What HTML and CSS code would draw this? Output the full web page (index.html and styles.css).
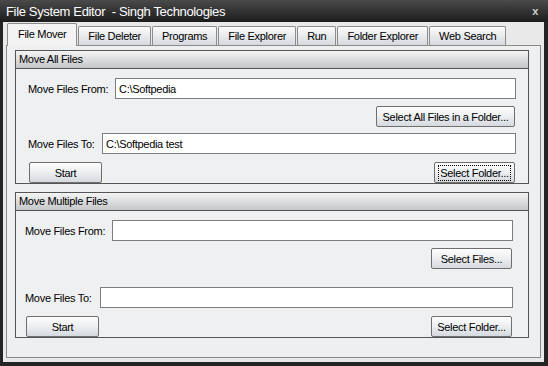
FILE: index.html
```html
<!DOCTYPE html>
<html lang="en">
<head>
    <meta charset="UTF-8">
    <title>File System Editor</title>
    <link rel="stylesheet" href="styles.css">
</head>
<body>
    <div class="window">
        <div class="titlebar">
            <span class="title">File System Editor &nbsp;- Singh Technologies</span>
            <span class="close">x</span>
        </div>
        <div class="client">
            <!-- Tab strip -->
            <div class="tabs">
                <div class="tab active">File Mover</div>
                <div class="tab">File Deleter</div>
                <div class="tab">Programs</div>
                <div class="tab">File Explorer</div>
                <div class="tab">Run</div>
                <div class="tab">Folder Explorer</div>
                <div class="tab">Web Search</div>
            </div>
            <div class="panel">
                <!-- Move All Files -->
                <div class="group group-all">
                    <div class="group-head">Move All Files</div>
                    <div class="group-body">
                        <div class="row">
                            <label class="lbl lbl-from">Move Files From:</label>
                            <input type="text" class="field" value="C:\Softpedia">
                        </div>
                        <div class="row row-right">
                            <button class="btn btn-all">Select All Files in a Folder...</button>
                        </div>
                        <div class="row">
                            <label class="lbl lbl-to">Move Files To:</label>
                            <input type="text" class="field" value="C:\Softpedia test">
                        </div>
                        <div class="row row-split">
                            <button class="btn btn-start">Start</button>
                            <button class="btn btn-folder focused"><span>Select Folder...</span></button>
                        </div>
                    </div>
                </div>
                <!-- Move Multiple Files -->
                <div class="group group-multi">
                    <div class="group-head">Move Multiple Files</div>
                    <div class="group-body">
                        <div class="row">
                            <label class="lbl lbl-from">Move Files From:</label>
                            <input type="text" class="field" value="">
                        </div>
                        <div class="row row-right">
                            <button class="btn btn-files">Select Files...</button>
                        </div>
                        <div class="row row-to2">
                            <label class="lbl lbl-to2">Move Files To:</label>
                            <input type="text" class="field" value="">
                        </div>
                        <div class="row row-split">
                            <button class="btn btn-start">Start</button>
                            <button class="btn btn-folder">Select Folder...</button>
                        </div>
                    </div>
                </div>
            </div>
        </div>
    </div>
</body>
</html>
```

FILE: styles.css
```css
body {
    margin: 0;
    font-family: Tahoma, "Liberation Sans", Arial, sans-serif;
    font-size: 11px;
    letter-spacing: -0.3px;
    color: #000;
    overflow: hidden;
}
.window {
    width: 548px;
    height: 366px;
    background: #242424;
    display: flex;
    flex-direction: column;
}
.titlebar {
    height: 22px;
    background: linear-gradient(#4a4a4a, #1c1c1c);
    color: #fff;
    font-size: 13px;
    letter-spacing: -0.35px;
    display: flex;
    align-items: center;
    justify-content: space-between;
    padding: 0 10px 0 6px;
}
.close {
    color: #cfcfcf;
    font-weight: bold;
    font-size: 11px;
}
.client {
    flex: 1;
    margin: 0 4px 4px 3px;
    background: #e9e9e9;
    display: flex;
    flex-direction: column;
    padding: 0 3px 4px 3px;
}
.tabs {
    height: 23px;
    display: flex;
    align-items: flex-end;
    padding-left: 1px;
}
.tab {
    height: 18px;
    line-height: 18px;
    padding: 0 9px;
    margin-right: 1px;
    border: 1px solid #8c8c8c;
    border-bottom: none;
    border-radius: 2px 2px 0 0;
    background: linear-gradient(#fbfbfb, #d5d9de);
    white-space: nowrap;
}
.tab.active {
    height: 22px;
    line-height: 21px;
    margin-bottom: -1px;
    padding: 0 10px;
    background: #f3f3f3;
    position: relative;
    z-index: 1;
}
.panel {
    flex: 1;
    border: 1px solid #8a8a8a;
    background: #eeeff0;
    padding: 4px 11px 8px 8px;
    display: flex;
    flex-direction: column;
    gap: 8px;
}
.group {
    border: 1px solid #555;
    background: #eff0f1;
    display: flex;
    flex-direction: column;
}
.group-head {
    height: 17px;
    line-height: 17px;
    padding-left: 3px;
    border-bottom: 1px solid #555;
    background: linear-gradient(#f4f4f4, #c4c6c8);
}
.group-body {
    flex: 1;
}
.group-all .group-body {
    padding: 9px 12px 0 12px;
}
.group-multi .group-body {
    padding: 9px 15px 0 9px;
}
.row {
    display: flex;
    align-items: center;
}
.row-right {
    justify-content: flex-end;
    margin: 7px 1px 6px 0;
}
.row-split {
    justify-content: space-between;
    margin: 8px 1px 0 1px;
}
.row-to2 {
    margin-top: 18px;
}
.lbl {
    flex: none;
}
.lbl-from {
    width: 87px;
}
.lbl-to {
    width: 74px;
}
.lbl-to2 {
    width: 75px;
}
.field {
    flex: 1;
    min-width: 0;
    height: 21px;
    box-sizing: border-box;
    border: 1px solid #7d7d7d;
    background: #fff;
    padding: 0 3px;
    font-family: inherit;
    font-size: 11px;
    letter-spacing: -0.3px;
    margin: 0;
}
.btn {
    height: 21px;
    box-sizing: border-box;
    border: 1px solid #6f6f6f;
    border-radius: 2px;
    background: linear-gradient(#fdfdfd 0%, #eef0f2 45%, #d5dadf 100%);
    font-family: inherit;
    font-size: 11px;
    letter-spacing: -0.3px;
    padding: 0;
    color: #000;
}
.btn-all {
    width: 139px;
}
.btn-folder {
    width: 81px;
}
.btn-files {
    width: 81px;
}
.btn-start {
    width: 73px;
}
.focused span {
    outline: 1px dotted #000;
    padding: 1px 1px;
}
```
